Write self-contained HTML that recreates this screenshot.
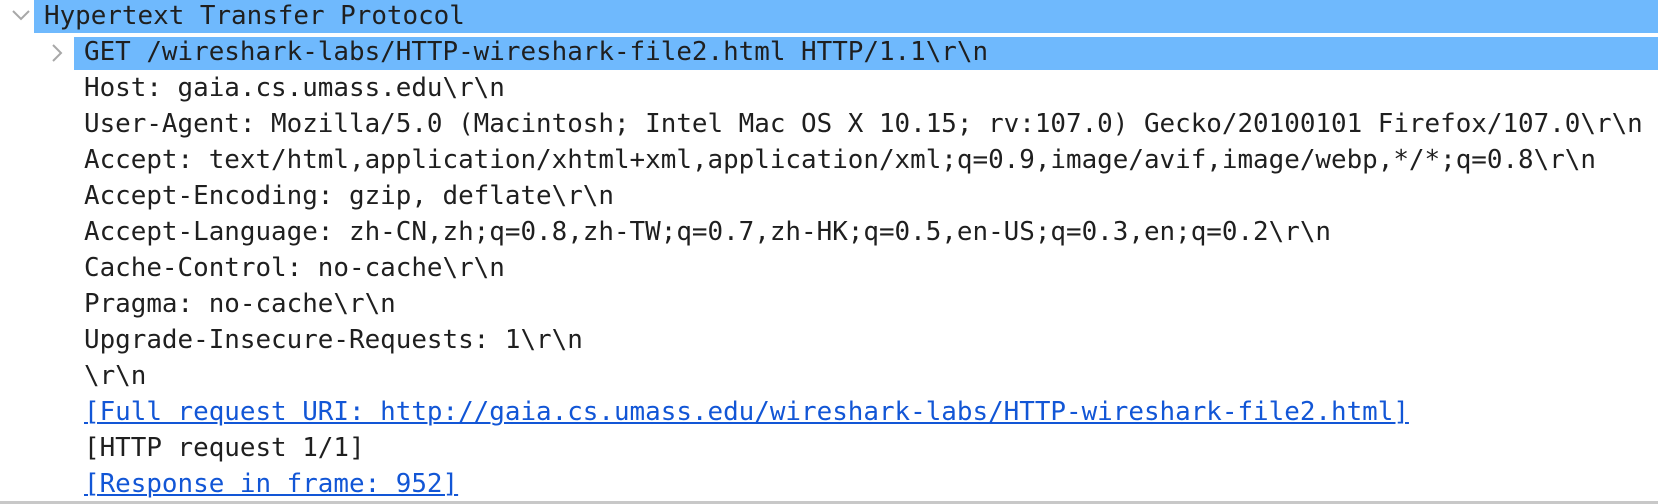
<!DOCTYPE html>
<html><head><meta charset="utf-8"><style>
html,body{margin:0;padding:0;width:1658px;height:504px;overflow:hidden;background:#fff;}
.r{position:absolute;left:0;height:36px;line-height:36px;font-family:"DejaVu Sans Mono","Liberation Mono",monospace;font-size:25.9px;color:#1f1f1f;white-space:pre;}
.hl{position:absolute;right:0;height:33px;background:#6fb9fd;}
.a{color:#1256d6;text-decoration:underline;text-decoration-thickness:2px;text-underline-offset:2px;}
.line{position:absolute;left:0;right:0;top:501px;height:3px;background:#c8c8c8;}
svg{position:absolute;}
</style></head><body>
<div class="hl" style="left:34px;top:0;"></div>
<div class="hl" style="left:74px;top:37px;"></div>
<svg style="left:11px;top:8px" width="20" height="14"><polyline points="2,3 10,11 18,3" fill="none" stroke="#a8a8a8" stroke-width="2"/></svg>
<svg style="left:50px;top:43px" width="14" height="20"><polyline points="3,2 11,10 3,18" fill="none" stroke="#a8a8a8" stroke-width="2"/></svg>
<div class="r" style="left:44px;top:-2px">Hypertext Transfer Protocol</div>
<div class="r" style="left:84px;top:34px">GET /wireshark-labs/HTTP-wireshark-file2.html HTTP/1.1\r\n</div>
<div class="r" style="left:84px;top:70px">Host: gaia.cs.umass.edu\r\n</div>
<div class="r" style="left:84px;top:106px">User-Agent: Mozilla/5.0 (Macintosh; Intel Mac OS X 10.15; rv:107.0) Gecko/20100101 Firefox/107.0\r\n</div>
<div class="r" style="left:84px;top:142px">Accept: text/html,application/xhtml+xml,application/xml;q=0.9,image/avif,image/webp,*/*;q=0.8\r\n</div>
<div class="r" style="left:84px;top:178px">Accept-Encoding: gzip, deflate\r\n</div>
<div class="r" style="left:84px;top:214px">Accept-Language: zh-CN,zh;q=0.8,zh-TW;q=0.7,zh-HK;q=0.5,en-US;q=0.3,en;q=0.2\r\n</div>
<div class="r" style="left:84px;top:250px">Cache-Control: no-cache\r\n</div>
<div class="r" style="left:84px;top:286px">Pragma: no-cache\r\n</div>
<div class="r" style="left:84px;top:322px">Upgrade-Insecure-Requests: 1\r\n</div>
<div class="r" style="left:84px;top:358px">\r\n</div>
<div class="r a" style="left:84px;top:394px">[Full request URI: http://gaia.cs.umass.edu/wireshark-labs/HTTP-wireshark-file2.html]</div>
<div class="r" style="left:84px;top:430px">[HTTP request 1/1]</div>
<div class="r a" style="left:84px;top:466px">[Response in frame: 952]</div>
<div class="line"></div>
</body></html>
